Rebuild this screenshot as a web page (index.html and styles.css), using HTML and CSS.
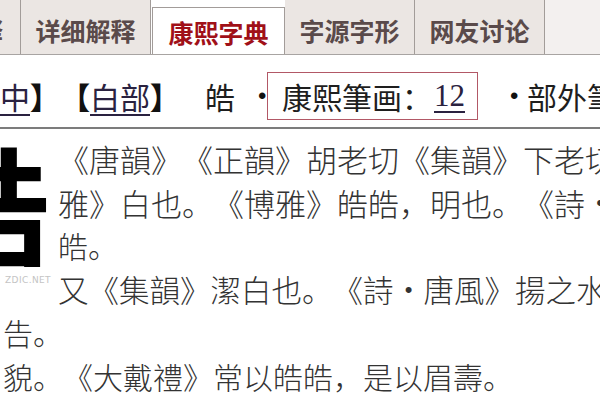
FILE: index.html
```html
<!DOCTYPE html>
<html lang="zh">
<head>
<meta charset="utf-8">
<link rel="stylesheet" href="styles.css">
</head>
<body>
<div class="tabs">
  <div class="tab tab-cut"><span>基本解释</span></div>
  <div class="tab">详细解释</div>
  <div class="tab active">康熙字典</div>
  <div class="tab">字源字形</div>
  <div class="tab">网友讨论</div>
  <div class="tab-rest"></div>
</div>
<div class="info">
  <span class="u c-zhong">中</span><span class="br">】</span><span class="br">【</span><span class="u">白部</span><span class="br">】</span>
  <span class="hao">皓</span>
  <span class="dot">•</span>
  <span class="box">康熙筆画：<span class="u num">12</span></span>
  <span class="dot dot2">•</span>
  <span class="more">部外筆</span>
</div>
<div class="content">
  <div class="left">
    <div class="big-wrap"><span class="big">皓</span></div>
    <div class="mark">ZDIC.NET</div>
  </div>
  <div class="right">
    <div class="line l1">《唐韻》《正韻》胡老切《集韻》下老切</div>
    <div class="line l1">雅》白也。《博雅》皓皓，明也。《詩<span class="mid">•</span></div>
    <div class="line">皓。</div>
    <div class="line l4">又《集韻》潔白也。《詩<span class="mid">•</span>唐風》揚之水</div>
  </div>
</div>
<div class="tail">
  <div class="line">告。</div>
  <div class="line">貌。《大戴禮》常以皓皓，是以眉壽。</div>
</div>
</body>
</html>
```

FILE: styles.css
```css
html, body {
  margin: 0;
  padding: 0;
  background: #ffffff;
  width: 600px;
  height: 400px;
  overflow: hidden;
}
body {
  font-family: "Noto Sans CJK TC", "Noto Sans CJK SC", sans-serif;
  color: #2a2a2a;
  text-spacing-trim: space-all;
  font-kerning: none;
}
.tabs {
  display: flex;
  height: 55px;
  box-sizing: border-box;
  border-bottom: 1px solid #a8a4a2;
  background: #ffffff;
  overflow: hidden;
}
.tab {
  flex: none;
  width: 130px;
  height: 54px;
  box-sizing: border-box;
  background: #ebe6e3;
  border-right: 1px solid #a29c99;
  display: flex;
  align-items: center;
  justify-content: center;
  padding-top: 6px;
  font-family: "Noto Sans CJK SC", sans-serif;
  font-weight: 700;
  font-size: 25px;
  color: #5a4a4a;
}
.tab-cut {
  width: 21px;
  justify-content: flex-end;
  overflow: hidden;
}
.tab-cut span {
  flex: none;
  margin-right: 17px;
}
.tab.active {
  width: 133px;
  margin-top: 7px;
  height: 48px;
  padding-top: 0;
  background: #ffffff;
  border: 1px solid #a29c99;
  border-bottom: none;
  margin-left: 1px;
  margin-bottom: -1px;
  color: #a01018;
}
.tab-rest {
  flex: 1;
  height: 54px;
  background: #f3f0ef;
}
.info {
  height: 74px;
  box-sizing: border-box;
  border-bottom: 2px solid #7c7c7c;
  display: flex;
  align-items: center;
  padding-top: 10px;
  font-size: 30px;
  color: #1e1e1e;
  white-space: nowrap;
  margin-right: -200px;
}
.u {
  text-decoration: underline;
  text-decoration-thickness: 1.5px;
  text-underline-offset: 5px;
  color: #2a2240;
}
.br {
  font-weight: 900;
  color: #111;
}
.hao {
  margin-left: 25px;
}
.dot {
  margin-left: 23px;
  font-family: "Liberation Sans", sans-serif;
  font-size: 24px;
  width: 9px;
  color: #111;
}
.box {
  border: 1.5px solid #b25866;
  padding: 4px 12px 4px 14px;
  height: 48px;
  box-sizing: border-box;
  display: flex;
  align-items: center;
}
.num {
  font-family: "Liberation Serif", serif;
  font-size: 31px;
  margin-left: 2px;
}
.dot2 {
  margin-left: 32px;
}
.more {
  margin-left: 8px;
}
.content {
  display: flex;
  padding-top: 8px;
}
.left {
  flex: none;
  width: 58px;
  height: 174px;
}
.big-wrap {
  width: 50px;
  height: 130px;
  overflow: hidden;
}
.big {
  display: block;
  font-size: 132px;
  line-height: 132px;
  font-weight: 700;
  color: #000;
  margin-left: -82px;
  margin-top: 0px;
  width: 132px;
}
.mark {
  margin-top: 8px;
  margin-left: 5px;
  font-family: "DejaVu Sans", sans-serif;
  font-size: 9px;
  letter-spacing: 0.4px;
  color: #c4c4c4;
}
.right {
  flex: 1;
  white-space: nowrap;
}
.line {
  font-size: 30px;
  line-height: 43.5px;
  height: 43.5px;
  white-space: nowrap;
  color: #333333;
  font-weight: 300;
}
.l1 {
  font-size: 31px;
}
.l4 {
  font-size: 30.5px;
}
.mid {
  font-family: "Liberation Sans", sans-serif;
  font-size: 22px;
  display: inline-block;
  width: 30px;
  text-align: center;
  vertical-align: top;
  line-height: 43.5px;
}
.tail {
  padding-left: 3px;
}
```
